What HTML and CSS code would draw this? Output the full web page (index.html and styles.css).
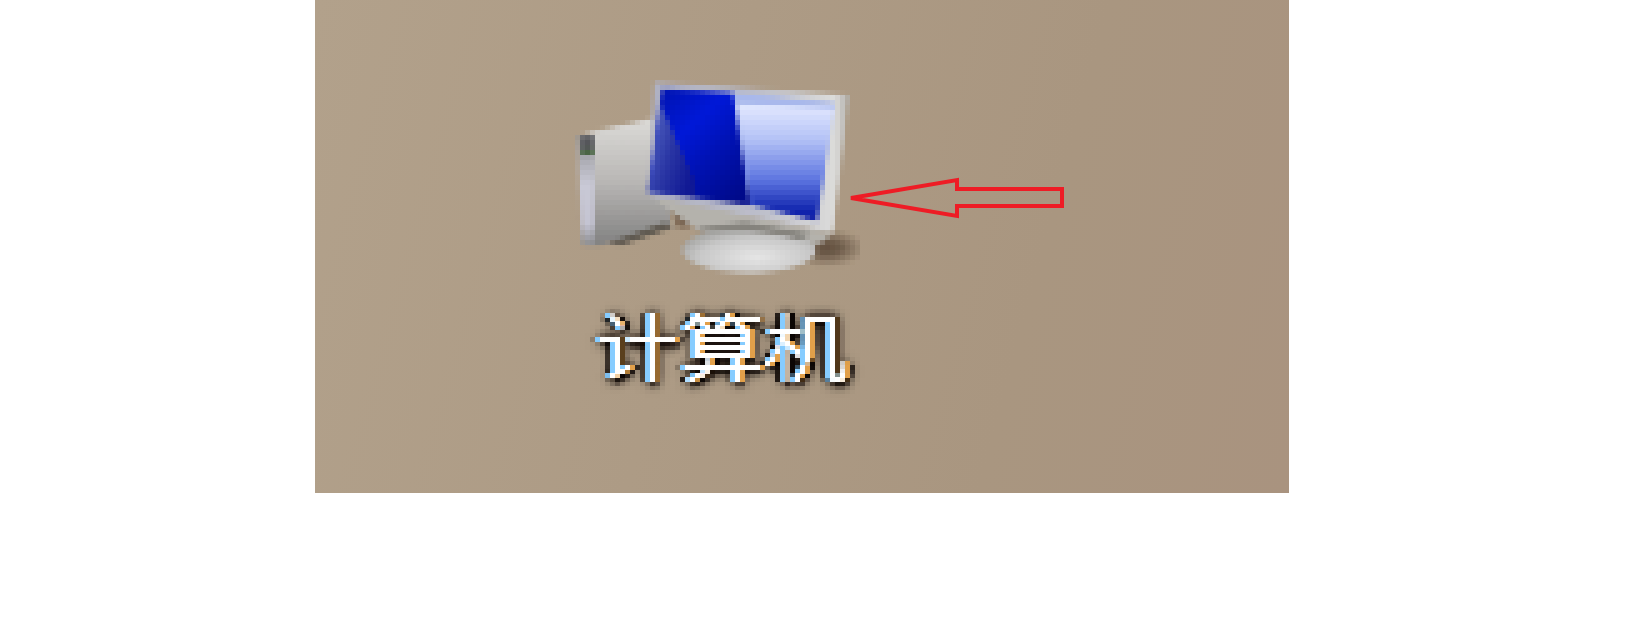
FILE: index.html
```html
<!DOCTYPE html>
<html lang="zh">
<head>
<meta charset="utf-8">
<title>计算机</title>
<link rel="stylesheet" href="styles.css">
</head>
<body>
<svg class="defs" width="0" height="0" aria-hidden="true">
  <defs>
    <filter id="pixelate" x="0" y="0" width="100%" height="100%" color-interpolation-filters="sRGB">
      <feFlood x="2" y="2" width="1" height="1"/>
      <feComposite width="5" height="5"/>
      <feTile result="grid"/>
      <feComposite in="SourceGraphic" in2="grid" operator="in"/>
      <feMorphology operator="dilate" radius="2"/>
    </filter>
    <filter id="pixelate-soft" x="0" y="0" width="100%" height="100%" color-interpolation-filters="sRGB">
      <feFlood x="2" y="2" width="1" height="1"/>
      <feComposite width="5" height="5"/>
      <feTile result="grid"/>
      <feGaussianBlur in="SourceGraphic" stdDeviation="1.6" result="soft"/>
      <feComposite in="soft" in2="grid" operator="in"/>
      <feMorphology operator="dilate" radius="2"/>
    </filter>
    <linearGradient id="towerFront" x1="0" y1="0" x2="0" y2="1">
      <stop offset="0" stop-color="#dcdbd8"/>
      <stop offset=".5" stop-color="#b8b6b4"/>
      <stop offset="1" stop-color="#808080"/>
    </linearGradient>
    <linearGradient id="towerSide" x1="0" y1="0" x2="0" y2="1">
      <stop offset="0" stop-color="#8f8f90"/>
      <stop offset=".45" stop-color="#c9c9d6"/>
      <stop offset=".8" stop-color="#c4c4d2"/>
      <stop offset="1" stop-color="#8a8a8c"/>
    </linearGradient>
    <linearGradient id="bezel" x1="0" y1="0" x2="1" y2="0">
      <stop offset="0" stop-color="#aeb0c2"/>
      <stop offset=".55" stop-color="#bcbeca"/>
      <stop offset=".93" stop-color="#dcdcda"/>
      <stop offset="1" stop-color="#aeaca8"/>
    </linearGradient>
    <linearGradient id="screenDark" x1="0" y1="0" x2=".8" y2="1">
      <stop offset="0" stop-color="#0012a8"/>
      <stop offset=".4" stop-color="#0018d8"/>
      <stop offset=".65" stop-color="#0012b4"/>
      <stop offset="1" stop-color="#000a8a"/>
    </linearGradient>
    <linearGradient id="screenLight" x1="0" y1="0" x2="0" y2="1">
      <stop offset="0" stop-color="#e4eaff"/>
      <stop offset=".3" stop-color="#b4c2f6"/>
      <stop offset=".65" stop-color="#5c74e0"/>
      <stop offset=".9" stop-color="#1428b0"/>
      <stop offset="1" stop-color="#0612a0"/>
    </linearGradient>
    <linearGradient id="glare" x1="0" y1="0" x2="1" y2=".6">
      <stop offset="0" stop-color="#5c6ec8"/>
      <stop offset=".55" stop-color="#2a36a4"/>
      <stop offset="1" stop-color="#101894"/>
    </linearGradient>
    <radialGradient id="base" cx=".55" cy=".65" r=".6">
      <stop offset="0" stop-color="#e6e6e6"/>
      <stop offset=".7" stop-color="#c8c8c8"/>
      <stop offset="1" stop-color="#a8a8a6"/>
    </radialGradient>
    <radialGradient id="shade">
      <stop offset="0" stop-color="#62503f"/>
      <stop offset=".35" stop-color="#62503f" stop-opacity=".85"/>
      <stop offset="1" stop-color="#62503f" stop-opacity="0"/>
    </radialGradient>
  </defs>
</svg>

<main class="desktop">
  <div class="desktop-icon">
    <svg class="computer" width="290" height="200" viewBox="570 75 290 200">
      <ellipse cx="826" cy="248" rx="40" ry="19" fill="url(#shade)"/>
      <path d="M577 136 L595 131 L654 118 L672 228 L596 246 L582 245Z" fill="url(#towerFront)"/>
      <path d="M577 136 L594 135 L594 246 L582 245Z" fill="url(#towerSide)"/>
      <rect x="581" y="136" width="13" height="13" fill="#55565a"/>
      <rect x="581" y="149" width="13" height="6" fill="#466240"/>
      <path d="M608 243 L666 222 L672 228 L622 245Z" fill="#5f5950"/>
      <path d="M670 208 L712 216 L706 226 L678 228Z" fill="#7a6552"/>
      <path d="M650 196 L832 234 L820 244 L700 232Z" fill="#b4b2ac"/>
      <ellipse cx="749" cy="250" rx="67" ry="23" fill="url(#base)"/>
      <path d="M698 228 L745 222 L812 234 L800 240 Q750 226 698 232Z" fill="#85837d"/>
      <path d="M654 82 L849 95 L833 233 L648 196Z" fill="url(#bezel)"/>
      <path d="M662 89 L733 93 L750 205 L648 192Z" fill="url(#screenDark)"/>
      <path d="M661 105 L694 180 L696 198 L649 192Z" fill="url(#glare)"/>
      <path d="M733 93 L835 103 L817 221 L750 205Z" fill="#a8b8ec"/>
      <path d="M737 104 L834 108 L817 221 L751 205Z" fill="url(#screenLight)"/>
    </svg>
    <span class="label">计算机</span>
  </div>
  <svg class="arrow" width="226" height="50" viewBox="845 173 226 50">
    <path d="M851 198 L957 180 L957 189 L1062 189 L1062 206 L957 206 L957 216Z" fill="none" stroke="#ee1c25" stroke-width="4"/>
  </svg>
</main>
</body>
</html>
```
FILE: styles.css
```css
html, body {
  margin: 0;
  padding: 0;
  background: #fff;
}

body {
  width: 1649px;
  height: 637px;
  overflow: hidden;
}

.defs {
  position: absolute;
}

.desktop {
  position: relative;
  width: 974px;
  height: 493px;
  margin-left: 315px;
  background: linear-gradient(105deg, #b2a18b 0%, #ad9b85 40%, #a99680 72%, #a9937f 100%);
}

.desktop-icon {
  position: absolute;
  left: 255px;
  top: 75px;
  display: flex;
  flex-direction: column;
  align-items: flex-start;
}

.computer {
  display: block;
  filter: url(#pixelate-soft);
}

.label {
  margin-top: 16px;
  padding: 16px 16px;
  margin-left: 10px;
  font-family: "Noto Sans CJK SC", sans-serif;
  font-size: 84px;
  font-weight: 300;
  line-height: 72px;
  color: #fff;
  white-space: nowrap;
  transform: scaleY(.88);
  text-shadow: -4px 0 0 #86ccff, 4px 0 0 #e2a04a, 7px 2px 1px #0c0604, -7px 2px 2px #0c0604, 3px 6px 4px #0c0604, 0 0 8px #120a06, 3px 3px 10px #120a06, 0 3px 14px #1a120c, 2px 2px 14px #1a120c;
  filter: url(#pixelate);
}

.arrow {
  position: absolute;
  left: 530px;
  top: 173px;
}
```
